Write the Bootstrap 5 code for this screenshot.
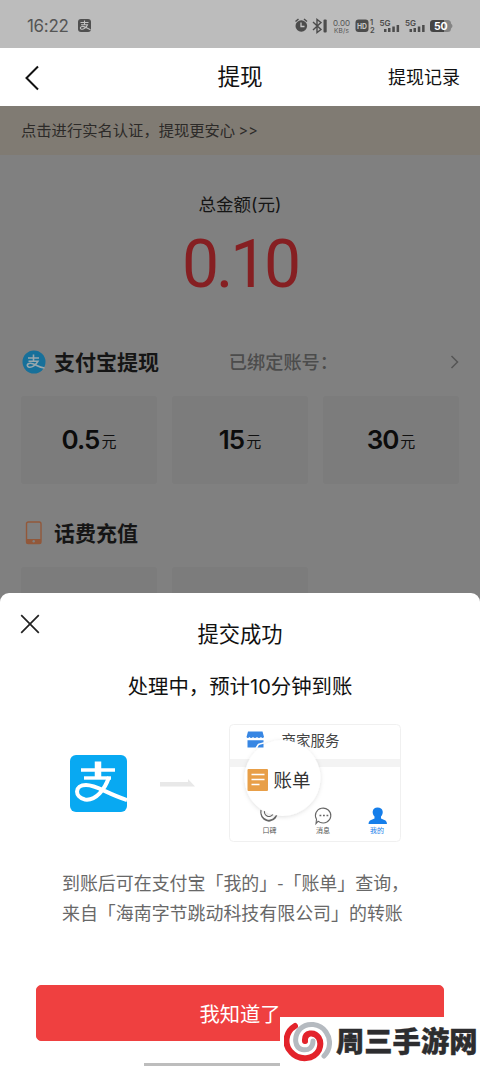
<!DOCTYPE html>
<html lang="zh-CN">
<head>
<meta charset="utf-8">
<meta name="viewport" content="width=device-width, initial-scale=1">
<title>提现</title>
<link rel="stylesheet" href="https://cdn.jsdelivr.net/npm/bootstrap@5.3.0/dist/css/bootstrap.min.css">
<style>
body{font-family:"Noto Sans CJK SC",sans-serif;color:#111;background:#808080;line-height:1.5}
.screen{width:480px;height:1067px}
.statusbar{height:48px;background:#bcbcbc;color:#555;padding:3px 26px 0 27px}
.clock{font:400 17px/24px Inter,sans-serif;letter-spacing:-.3px}
.titlebar{height:58px;padding:0 20px 2px 24px}
.titlebar h1{font-size:22.6px;font-weight:400;color:#111}
.side{width:90px}
.side-start{width:86px}
.record{font-size:18px;white-space:nowrap}
.notice{height:49px;background:#807b73;color:#2c2a28;font-size:15.3px;padding:0 0 2px 21px}
.notice span{font-family:Inter,sans-serif;font-size:14.5px}
.total-label{font-size:17.5px;line-height:26px;margin-top:36px;color:#151515}
.total-label span{font-family:Inter,sans-serif}
.total-value{font:400 66px/76px Roboto,sans-serif;color:#861f22;margin-top:9px;letter-spacing:-3.2px;padding-left:0}
.sect{height:32px;padding:0 20px 0 22px}
.sect-pay{margin-top:43px}
.sect-phone{margin-top:33px}
.sect h2{font-size:21px;font-weight:700;color:#151515}
.bound{font-size:18.2px;color:#4c4c4c;font-weight:500;margin-right:112px}
.amounts{display:grid;grid-template-columns:repeat(3,136px);gap:15px;margin:18px 0 0 21px}
.amount{height:88px;background:#7c7c7c;border-radius:3px;font-size:15px;gap:2px;padding-bottom:1px}
.amount b{font:600 26px/32px Inter,sans-serif;letter-spacing:-1px;color:#0c0c0c}
.sheet{height:474px;border-radius:9px 9px 0 0}
.sheet h3{font-size:21.3px;font-weight:400;line-height:32px;margin-top:24px}
.state{font-size:20.4px;line-height:30px;margin-top:21px;font-weight:400}
.state span{font-family:Inter,sans-serif;font-size:20px}
.guide{height:118px;margin-top:22px;padding:0 79px 0 70px}
.desc{font-size:17.95px;line-height:30px;color:#686868;margin:25px 0 0 62px;white-space:nowrap}
.ok-btn{height:56px;margin:58px 36px 0;--bs-btn-bg:#ef4040;--bs-btn-border-color:#ef4040;--bs-btn-color:#fff;--bs-btn-border-radius:5px;font-size:20.3px}
.close-x{left:20px;top:21px}
.homebar{left:144px;bottom:1px;width:192px;height:3px;background:#bdbdbd}
.brand{width:200px;height:50px;color:#2d2d2f;font-size:28.3px;font-weight:900;-webkit-text-stroke:.4px #2d2d2f;white-space:nowrap}
.brand span{padding-bottom:3px}
svg text{font-family:"Noto Sans CJK SC",sans-serif}
svg .latin{font-family:Inter,sans-serif}
</style>
</head>
<body>
<div class="screen position-relative overflow-hidden">
  <header class="statusbar d-flex align-items-center justify-content-between">
    <div class="d-flex align-items-center">
      <span class="clock">16:22</span>
      <svg class="ms-2" width="15" height="15" viewBox="0 0 15 15"><rect x="1" y="1" width="13" height="13" rx="3" fill="#505050"/><path d="M3.500 4.500h8M7.500 2.500v4M4 6.700h6.500C9.500 9.500 6 12 4 11c-2-1.500 1-3.500 4-2l5.500 2.700" fill="none" stroke="#c2c2c2" stroke-width="1.100"/></svg>
    </div>
    <svg width="160" height="20" viewBox="294 16 160 20">
      <path d="M295.500 21.500l3-2.500M307 21.500l-3-2.500" fill="none" stroke="#4c4c4c" stroke-width="1.500"/>
      <circle cx="301.300" cy="26" r="5.800" fill="#4c4c4c"/><path d="M301 22.500V26.500h3.500" fill="none" stroke="#c5c5c5" stroke-width="1.300"/>
      <path d="M313 22l8 7.500-4 3V19.500l4 3-8 7.500" fill="none" stroke="#4c4c4c" stroke-width="1.400"/><rect x="323.500" y="19.500" width="3.200" height="13" rx="1" fill="#4c4c4c"/>
      <g fill="#555"><text class="latin" x="333" y="25.500" font-size="8" textLength="17">0.00</text><text class="latin" x="334" y="32.500" font-size="6.500" textLength="15">KB/s</text></g>
      <rect x="355.500" y="19.500" width="13" height="12.500" rx="3" fill="#4c4c4c"/><text class="latin" x="357" y="29" font-size="8" font-weight="700" fill="#c8c8c8" textLength="10" lengthAdjust="spacingAndGlyphs">HD</text>
      <g fill="#4c4c4c" font-weight="600"><text class="latin" x="370" y="25" font-size="7.500">1</text><text class="latin" x="370" y="32.500" font-size="7.500">2</text>
      <text class="latin" x="379.500" y="25.500" font-size="8" textLength="11">5G</text><text class="latin" x="405" y="25.500" font-size="8" textLength="11">5G</text></g>
      <path d="M384 29h2.500v3H384zM388 28h2.500v4H388zM392.300 26.500h2.500V32h-2.500zM396.600 25h2.500v7h-2.500zM409.500 29h2.500v3h-2.500zM413.500 28h2.500v4h-2.500zM417.800 26.500h2.500V32h-2.500zM422.100 25h2.500v7h-2.500z" fill="#4c4c4c"/>
      <rect x="430" y="20" width="21" height="12" rx="3.500" fill="#848484"/><path d="M433.500 20H444v12h-10.500q-3.500 0-3.500-3.500v-5q0-3.500 3.500-3.500z" fill="#444"/><path d="M451 23.500v5q3-2.500 0-5" fill="#848484"/>
      <text class="latin" x="434" y="29.800" font-size="10.500" font-weight="700" fill="#fff" textLength="13.500">50</text>
    </svg>
  </header>
  <nav class="titlebar bg-white d-flex align-items-center justify-content-between">
    <div class="side-start d-flex pt-1"><svg width="16" height="26" viewBox="0 0 16 26"><path d="M14 1.500L2.500 13L14 24.500" fill="none" stroke="#111" stroke-width="2"/></svg></div>
    <h1 class="m-0">提现</h1>
    <div class="side record d-flex justify-content-end">提现记录</div>
  </nav>
  <main>
    <div class="notice d-flex align-items-center">点击进行实名认证，提现更安心&nbsp;<span>&gt;&gt;</span></div>
    <div class="total-label text-center">总金额<span>(</span>元<span>)</span></div>
    <div class="total-value text-center">0.10</div>
    <div class="sect sect-pay d-flex align-items-center">
      <svg width="24" height="24" viewBox="0 0 24 24"><circle cx="12" cy="12" r="11.500" fill="#17709a"/><path d="M6 8h11M11.500 4.500v7M6.500 11.200h9.500C14 15 10 18 6.500 17c-3-2 0-5 5-3 3 1.200 6 3.500 11 4" fill="none" stroke="#99a7ad" stroke-width="1.600"/></svg>
      <h2 class="m-0 ms-2">支付宝提现</h2>
      <span class="bound ms-auto">已绑定账号：</span>
      <svg width="10" height="16" viewBox="0 0 10 16"><path d="M1.500 2l6 6-6 6" fill="none" stroke="#555" stroke-width="1.500"/></svg>
    </div>
    <div class="amounts">
      <div class="amount d-flex align-items-center justify-content-center"><b>0.5</b><span class="pt-1">元</span></div>
      <div class="amount d-flex align-items-center justify-content-center"><b>15</b><span class="pt-1">元</span></div>
      <div class="amount d-flex align-items-center justify-content-center"><b>30</b><span class="pt-1">元</span></div>
    </div>
    <div class="sect sect-phone d-flex align-items-center">
      <svg width="24" height="24" viewBox="0 0 24 24"><rect x="4.500" y="1" width="14.500" height="21.500" rx="1.800" fill="none" stroke="#92583a" stroke-width="1.400"/><path d="M4.500 18h14.500v3.500q0 1-1 1h-12.500q-1 0-1-1z" fill="#92583a"/><circle cx="11.700" cy="20.200" r="1.200" fill="#808080"/></svg>
      <h2 class="m-0 ms-2">话费充值</h2>
    </div>
    <div class="amounts"><div class="amount"></div><div class="amount"></div></div>
  </main>

  <section class="sheet position-absolute bottom-0 start-0 w-100 bg-white overflow-hidden">
    <svg class="close-x position-absolute" width="20" height="20" viewBox="0 0 20 20"><path d="M1.200 1.200l17.600 17.600M18.800 1.200L1.200 18.800" stroke="#222" stroke-width="1.700"/></svg>
    <h3 class="text-center mb-0">提交成功</h3>
    <p class="state text-center mb-0">处理中，预计<span>10</span>分钟到账</p>
    <div class="guide d-flex align-items-center justify-content-between">
      <svg width="57" height="57" viewBox="0 0 57 57"><rect width="57" height="57" rx="6" fill="#08a9f2"/><g fill="none" stroke="#fff"><path d="M11 15h34" stroke-width="3.600"/><path d="M28 6.500v17" stroke-width="6.500"/><path d="M14 23h27" stroke-width="3.400"/><path d="M39 22C35 34 26 46 15 44.500C4 42 4.500 30 16 30C27 30 37 39 57 45" stroke-width="4"/></g></svg>
      <svg width="36" height="10" viewBox="0 0 36 10"><path d="M0 4h28V1l7 7.500H0z" fill="#e8e8e8"/></svg>
      <svg width="172" height="118" viewBox="0 0 172 118">
        <defs><filter id="lensShadow" x="-20%" y="-20%" width="140%" height="140%"><feDropShadow dx="0" dy="1" stdDeviation="2" flood-color="#000" flood-opacity=".13"/></filter></defs>
        <rect x=".5" y=".5" width="171" height="117" rx="4" fill="#fff" stroke="#f0f0f0"/>
        <path d="M1 35h170v8H1z" fill="#f3f3f3"/>
        <text x="52.500" y="21.800" font-size="14.500" fill="#444">商家服务</text>
        <path d="M32 86a8 8 0 0 0 16 4M36 86a4 4 0 0 0 8 4l3-4M32 90a8 8 0 0 0 16-2v-3" fill="none" stroke="#666" stroke-width="1.200"/>
        <circle cx="53.500" cy="54" r="38" fill="#fff" filter="url(#lensShadow)"/>
        <path d="M19 7.500h14.500l1.500 5.500q-1.500 2-3 0-2 2-4 0-2 2-4 0-2 2-3.500 0-2 2-3 0z" fill="#3786e3"/>
        <path d="M18.500 16.200h16v2l-5.500 1.500-2.500 3.800h-8zM28.500 23.500l1.500-2.500 4.500-1.200v3.700z" fill="#3786e3"/>
        <rect x="18.500" y="45" width="20.500" height="22" rx="1" fill="#e89f48"/><path d="M22.500 50.500h13M22.500 55.500h13M22.500 60.500h8" stroke="#fff" stroke-width="1.600"/>
        <text x="44.500" y="62.800" font-size="18.500" fill="#333">账单</text>
        <path d="M89 97.300l-2 2.200.5-4.200a7.700 7.400 0 1 1 3.500 3z" fill="none" stroke="#666" stroke-width="1.100"/><path d="M90.500 91.500h1.800M94 91.500h1.800M97.500 91.500h1.800" stroke="#666" stroke-width="1.600"/>
        <path d="M148.500 83.500c6 0 6.500 6 3.500 9v2l4.500 2q1.500 1 1.500 3.500h-18.500q0-2.500 1.500-3.500l4.500-2v-2c-3-3-2.500-9 3-9z" fill="#157eea"/>
        <g font-size="7" text-anchor="middle"><text x="40.500" y="109" fill="#555">口碑</text><text x="94" y="109" fill="#555">消息</text><text x="148" y="109" fill="#157eea">我的</text></g>
      </svg>
    </div>
    <p class="desc mb-0">到账后可在支付宝「我的」-「账单」查询，<br>来自「海南字节跳动科技有限公司」的转账</p>
    <div class="d-grid"><button type="button" class="btn ok-btn p-0">我知道了</button></div>
    <div class="homebar position-absolute"></div>
    <div class="brand position-absolute bottom-0 end-0 bg-white d-flex align-items-center">
      <svg class="ms-1 flex-shrink-0" width="48" height="44" viewBox="0 0 48 44"><g fill="none" stroke-linecap="round">
        <path d="M40 36C47 29 47 19 42 12C36 3 23 2 16 9C9 17 11 28 18 29.500C25 31 29 27 29 21" stroke="#b5bac0" stroke-width="5"/>
        <path d="M11 6C1 12 0 25 7 32C15 41 30 40 35 30C39 20 33 12.500 26 13.500Q20.500 14.500 21 21" stroke="#e3232b" stroke-width="6"/></g></svg>
      <span class="ms-1">周三手游网</span>
    </div>
  </section>
</div>
<script src="https://cdn.jsdelivr.net/npm/bootstrap@5.3.0/dist/js/bootstrap.bundle.min.js"></script>
</body>
</html>
